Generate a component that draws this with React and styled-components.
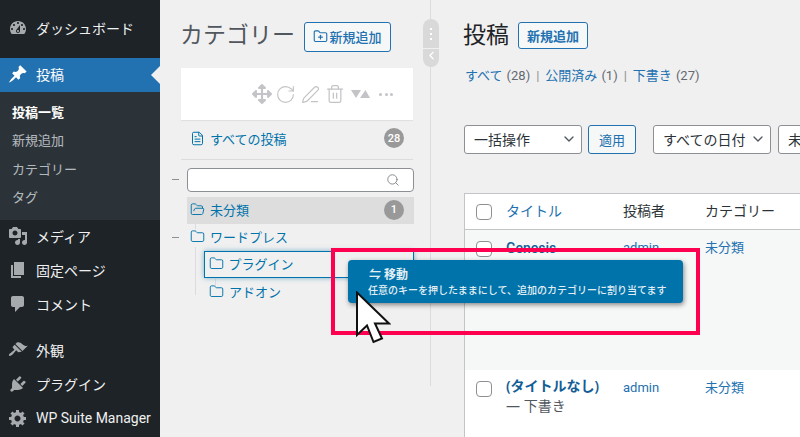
import * as React from 'react'
import styled, {createGlobalStyle} from 'styled-components'
import {
  ChevronDown,
  ChevronLeft,
  FileText,
  Folder,
  FolderOpen,
  FolderPlus,
  PenLine,
  RotateCw,
  Search,
  Trash2,
} from 'lucide-react'
import {FaArrowsAlt} from 'react-icons/fa'

const Global = createGlobalStyle`
  html, body {
    margin: 0;
    padding: 0;
    background: #f0f0f0;
  }
  * {
    box-sizing: border-box;
  }
`

const DASHICONS = {
  dashboard:
    'M3.76 16h12.48c1.1-1.37 1.76-3.11 1.76-5 0-4.42-3.58-8-8-8s-8 3.58-8 8c0 1.89.66 3.63 1.76 5zM10 4c.55 0 1 .45 1 1s-.45 1-1 1-1-.45-1-1 .45-1 1-1zM6 6c.55 0 1 .45 1 1s-.45 1-1 1-1-.45-1-1 .45-1 1-1zm8 0c.55 0 1 .45 1 1s-.45 1-1 1-1-.45-1-1 .45-1 1-1zm-5.37 5.55L12 7v6c0 1.1-.9 2-2 2s-2-.9-2-2c0-.57.24-1.08.63-1.45zM4 10c.55 0 1 .45 1 1s-.45 1-1 1-1-.45-1-1 .45-1 1-1zm12 0c.55 0 1 .45 1 1s-.45 1-1 1-1-.45-1-1 .45-1 1-1zm-5 3c0-.55-.45-1-1-1s-1 .45-1 1 .45 1 1 1 1-.45 1-1z',
  pin: 'M10.44 3.02l1.82-1.82 6.36 6.35-1.83 1.82c-1.05-.68-2.48-.57-3.41.36l-.75.75c-.92.93-1.04 2.35-.35 3.41l-1.83 1.82-2.41-2.41-2.8 2.79c-.42.42-3.38 2.71-3.8 2.29s1.86-3.39 2.28-3.81l2.79-2.79L4.1 9.36l1.83-1.82c1.05.69 2.48.57 3.4-.36l.75-.75c.93-.92 1.05-2.35.36-3.41z',
  media:
    'M13 11V4c0-.55-.45-1-1-1h-1.67L9 1H5L3.67 3H2c-.55 0-1 .45-1 1v7c0 .55.45 1 1 1h10c.55 0 1-.45 1-1zM7 4.5c1.38 0 2.5 1.12 2.5 2.5S8.38 9.5 7 9.5 4.5 8.38 4.5 7 5.62 4.5 7 4.5zM14 6h5v10.5c0 1.38-1.12 2.5-2.5 2.5S14 17.88 14 16.5s1.12-2.5 2.5-2.5c.17 0 .34.02.5.05V9h-3V6zm-4 8.05V13h2v3.5c0 1.38-1.12 2.5-2.5 2.5S7 17.88 7 16.5 8.12 14 9.5 14c.17 0 .34.02.5.05z',
  page: 'M6 15V2h10v13H6zm-1 1h8v2H3V5h2v11z',
  comment:
    'M5 2h9c1.1 0 2 .9 2 2v7c0 1.1-.9 2-2 2h-2l-5 5v-5H5c-1.1 0-2-.9-2-2V4c0-1.1.9-2 2-2z',
  brush:
    'M14.48 11.06L7.41 3.99l1.5-1.5c.5-.56 2.3-.47 3.51.32 1.21.8 1.43 1.28 2.91 2.1 1.18.64 2.45 1.26 4.45.85zm-.71.71L6.7 4.7 4.93 6.47c-.39.39-.39 1.02 0 1.41l1.06 1.06c.39.39.39 1.03 0 1.42-.6.6-1.43 1.11-2.21 1.69-.35.26-.7.53-1.01.84C1.43 13.23.4 14.91 1.2 15.7c.79.8 2.47-.23 3.83-1.59.31-.31.58-.66.84-1.01.58-.78 1.09-1.61 1.69-2.21.39-.39 1.02-.39 1.41 0l1.06 1.06c.39.39 1.02.39 1.41 0z',
  plugin:
    'M13.11 4.36L9.87 7.6 8 5.73l3.24-3.24c.35-.34 1.05-.2 1.56.32.52.51.66 1.21.31 1.55zm-8 1.77l.91-1.12 9.01 9.01-1.19.84c-.71.71-2.63 1.16-3.82 1.16H6.14L4.9 17.26c-.59.59-1.54.59-2.12 0-.59-.58-.59-1.53 0-2.12l1.24-1.24v-3.88c0-1.13.4-3.19 1.09-3.89zm7.26 3.97l3.24-3.24c.34-.35 1.04-.21 1.55.31.52.51.66 1.21.31 1.55l-3.24 3.25z',
  gear: 'M18 12h-2.18c-.17.7-.44 1.35-.81 1.93l1.54 1.54-2.1 2.1-1.54-1.54c-.58.36-1.23.63-1.91.79V19H8v-2.18c-.68-.16-1.33-.43-1.91-.79l-1.54 1.54-2.12-2.12 1.54-1.54c-.36-.58-.63-1.23-.79-1.91H1V9.03h2.17c.16-.7.44-1.35.8-1.94L2.43 5.55l2.1-2.1 1.54 1.54c.58-.37 1.24-.64 1.93-.81V2h3v2.18c.68.16 1.33.43 1.91.79l1.54-1.54 2.12 2.12-1.54 1.54c.36.59.64 1.24.8 1.94H18V12zm-8.5 1.5c1.66 0 3-1.34 3-3s-1.34-3-3-3-3 1.34-3 3 1.34 3 3 3z',
}

const Page = styled.div`
  position: relative;
  display: flex;
  width: 800px;
  height: 437px;
  overflow: hidden;
  background: #f0f0f0;
  color: #3c434a;
  font-family: Roboto, 'Noto Sans CJK JP', sans-serif;
  font-size: 13px;
`

/* ---------- admin menu ---------- */

const Sidebar = styled.nav`
  flex: 0 0 160px;
  padding-top: 12px;
  background: #1d2327;
`

const MenuItem = styled.div`
  position: relative;
  display: flex;
  align-items: center;
  gap: 8px;
  height: 34px;
  padding: 0 0 2px 8px;
  margin-bottom: ${p => (p.$gap ? '12px' : '0')};
  background: ${p => (p.$active ? '#2271b1' : 'transparent')};
  color: ${p => (p.$active ? '#fff' : '#f0f0f0')};
  font-size: 14px;
  white-space: nowrap;

  svg {
    flex: 0 0 20px;
    width: 20px;
    height: 20px;
    fill: ${p => (p.$active ? '#fff' : '#a7aaad')};
  }
`

const ActiveArrow = styled.span`
  position: absolute;
  right: 0;
  top: 8px;
  border: 9px solid transparent;
  border-left-width: 0;
  border-right-color: #f0f0f1;
`

const Submenu = styled.div`
  height: 128px;
  padding: 7px 0 0 12px;
  background: #2c3338;
`

const SubItem = styled.div`
  height: 28.3px;
  line-height: 28px;
  font-size: 13px;
  font-weight: ${p => (p.$current ? 700 : 400)};
  color: ${p => (p.$current ? '#fff' : 'rgba(240, 246, 252, 0.7)')};
`

function DashIcon({name}) {
  return (
    <svg viewBox="0 0 20 20">
      <path d={DASHICONS[name]} />
    </svg>
  )
}

/* ---------- category panel ---------- */

const CategoryPanel = styled.section`
  position: relative;
  flex: 0 0 271px;
  height: 386px;
  padding: 22px 17px 0 21px;
  border-right: 1px solid #dcdcde;
`

const TitleRow = styled.div`
  display: flex;
  align-items: center;
  gap: 9px;
  height: 30px;
`

const PageTitle = styled.h1`
  margin: -2px 0 0 -1px;
  font-size: 23px;
  font-weight: 400;
  line-height: 30px;
  color: ${p => p.$color || '#1d2327'};
`

const OutlineButton = styled.button`
  display: inline-flex;
  flex: 0 0 ${p => p.$w}px;
  align-items: center;
  justify-content: center;
  gap: 1px;
  width: ${p => p.$w}px;
  height: ${p => p.$h}px;
  margin-top: ${p => p.$mt || 0}px;
  padding: 0 0 1px;
  border: 1px solid #2271b1;
  border-radius: 3px;
  background: #f6f7f7;
  color: #2271b1;
  font: inherit;
  font-size: 13px;
  font-weight: ${p => p.$weight || 500};
`

const Toolbar = styled.div`
  display: flex;
  align-items: center;
  justify-content: flex-end;
  gap: 5px;
  height: 52px;
  margin-top: 16px;
  padding: 0 20px 0 0;
  background: #fff;
  box-shadow: 0 1px 1px rgba(0, 0, 0, 0.06);
  color: #c3c4c7;
`

const MoveIcon = styled(FaArrowsAlt)`
  margin-right: -2px;
`

const SortIcon = styled.svg`
  margin-left: 1px;
  fill: #c3c4c7;
`

const ToolDots = styled.span`
  display: flex;
  gap: 2.5px;
  margin-left: 3px;

  i {
    width: 3px;
    height: 3px;
    border-radius: 50%;
    background: #c3c4c7;
  }
`

const AllPosts = styled.div`
  display: flex;
  align-items: center;
  height: 40px;
  padding: 0 9px 3px 9px;
  border-bottom: 1px solid #dcdcde;
  color: #0073aa;
`

const RowLabel = styled.span`
  flex: 1;
  margin-left: ${p => p.$ml}px;
`

const CountBadge = styled.span`
  display: flex;
  align-items: center;
  justify-content: center;
  width: 20px;
  height: 20px;
  border-radius: 50%;
  background: #999;
  color: #fff;
  font-size: 11px;
  font-weight: 500;
`

const SearchRow = styled.div`
  position: relative;
  height: 24px;
  margin: 8px 0 5px 6px;
`

const SearchBox = styled.div`
  display: flex;
  align-items: center;
  justify-content: flex-end;
  height: 24px;
  margin-right: -1px;
  padding-right: 13px;
  border: 1px solid #8c8f94;
  border-radius: 4px;
  background: #fff;
  color: #72777c;
`

const Dash = styled.span`
  position: absolute;
  left: ${p => p.$left}px;
  top: ${p => p.$top}px;
  width: 7px;
  height: 1px;
  background: #8c8f94;
`

const Tree = styled.div`
  position: relative;
  margin-left: 6px;
  margin-right: -1px;
`

const TreeRow = styled.div`
  position: relative;
  display: flex;
  align-items: center;
  height: 27px;
  margin-left: ${p => p.$indent || 0}px;
  padding: 0 10px ${p => p.$pb}px ${p => p.$pad}px;
  color: #0073aa;
  background: ${p => (p.$hover ? '#ddd' : 'transparent')};
  border: ${p => (p.$selected ? '1.5px solid #0073aa' : '0 none')};
  box-shadow: ${p => (p.$selected ? '0 0 5px rgba(0, 115, 170, 0.5)' : 'none')};
`

const Guide = styled.span`
  position: absolute;
  left: ${p => p.$left}px;
  top: ${p => p.$top}px;
  width: 1px;
  height: ${p => p.$h}px;
  background: #dcdcde;
`

const Splitter = styled.div`
  position: absolute;
  right: -9px;
  top: 19px;
  display: flex;
  flex-direction: column;
  align-items: center;
  width: 16px;
  height: 48px;
  border-radius: 8px;
  background: #d9d9d9;
  color: #fff;
  overflow: hidden;
`

const SplitterGrip = styled.div`
  display: flex;
  flex: 0 0 30px;
  flex-direction: column;
  align-items: center;
  justify-content: center;
  gap: 3px;
  width: 100%;
  border-bottom: 1px solid #f0f0f0;

  i {
    width: 2px;
    height: 2px;
    background: #fff;
  }
`

/* ---------- posts list ---------- */

const Main = styled.main`
  flex: 1;
  min-width: 0;
  padding: 22px 0 0 33px;
  overflow: hidden;
`

const Filters = styled.div`
  display: flex;
  height: 20px;
  margin: 14px 0 0 1px;
  line-height: 20px;
  color: #646970;
  white-space: nowrap;
`

const FilterLink = styled.a`
  margin-right: 4px;
  color: #2271b1;
`

const Pipe = styled.span`
  margin: 0 6px 0 6px;
  color: #8c8f94;
`

const Actions = styled.div`
  display: flex;
  align-items: center;
  height: 29px;
  margin-top: 39px;
  white-space: nowrap;
`

const SelectBox = styled.div`
  display: flex;
  flex: 0 0 ${p => p.$w}px;
  align-items: center;
  justify-content: space-between;
  height: 29px;
  margin: 0 ${p => p.$mr}px 0 ${p => p.$ml || 0}px;
  padding: 0 4px 1px ${p => p.$pl}px;
  border: 1px solid #8c8f94;
  border-radius: 3px;
  background: #fff;
  color: #2c3338;
  font-size: 14px;
`

const Table = styled.div`
  width: 420px;
  height: 260px;
  margin-top: 39px;
  background: #fff;
  border: 1px solid #c3c4c7;
  border-right: 0;
`

const TableRow = styled.div`
  display: grid;
  grid-template-columns: 41px 117px 82px 1fr;
  align-items: start;
  height: ${p => p.$h}px;
  padding-top: ${p => p.$pt}px;
  background: ${p => (p.$tint ? '#f6f7f7' : '#fff')};
  border-bottom: ${p => (p.$head ? '1px solid #c3c4c7' : '0 none')};
  font-size: ${p => (p.$head ? '14px' : '13px')};
`

const Check = styled.span`
  display: block;
  width: 16px;
  height: 16px;
  margin: ${p => p.$mt}px 0 0 11px;
  border: 1px solid #8c8f94;
  border-radius: 4px;
  background: #fff;
`

const CellLink = styled.a`
  color: #2271b1;
  line-height: 20px;
`

const GenesisLink = styled(CellLink)`
  color: #135e96;
  font-size: 14px;
  font-weight: 500;
`

const PostTitle = styled.div`
  margin-top: -2px;
  font-family: 'Noto Sans', 'Noto Sans CJK JP', sans-serif;
  font-size: 14px;
  line-height: 20px;
  color: #50575e;

  b {
    display: block;
    color: #135e96;
    font-weight: 600;
  }
`

const HeadText = styled.span`
  color: ${p => p.$color || '#2c3338'};
  line-height: 20px;
`

/* ---------- overlay ---------- */

const Highlight = styled.div`
  position: absolute;
  left: 331px;
  top: 248px;
  width: 369px;
  height: 87px;
  border: 4px solid #ff0050;
`

const Tip = styled.div`
  position: absolute;
  left: 348px;
  top: 260px;
  width: 335px;
  height: 43px;
  padding: 5px 0 0 20px;
  border-radius: 4px;
  background: #0073aa;
  box-shadow: 1px 2px 5px rgba(0, 0, 0, 0.45);
  color: #e3eff5;
  font-size: 10px;
  font-weight: 500;
  white-space: nowrap;
`

const TipTitle = styled.div`
  display: flex;
  align-items: center;
  gap: 3px;
  margin-left: 1px;
  height: 17px;
  font-size: 12px;
  font-weight: 700;
`

const Cursor = styled.svg`
  position: absolute;
  left: 355px;
  top: 291px;
  width: 36px;
  height: 53px;
`

const MENU_TOP = [{icon: 'dashboard', label: 'ダッシュボード', gap: true}]
const MENU_MIDDLE = [
  {icon: 'media', label: 'メディア'},
  {icon: 'page', label: '固定ページ'},
  {icon: 'comment', label: 'コメント', gap: true},
  {icon: 'brush', label: '外観'},
  {icon: 'plugin', label: 'プラグイン'},
  {icon: 'gear', label: 'WP Suite Manager'},
]
const SUBMENU = ['投稿一覧', '新規追加', 'カテゴリー', 'タグ']

function AdminMenu() {
  const item = m => (
    <MenuItem key={m.label} $gap={m.gap}>
      <DashIcon name={m.icon} />
      {m.label}
    </MenuItem>
  )
  return (
    <Sidebar>
      {MENU_TOP.map(item)}
      <MenuItem $active>
        <DashIcon name="pin" />
        投稿
        <ActiveArrow />
      </MenuItem>
      <Submenu>
        {SUBMENU.map((s, i) => (
          <SubItem key={s} $current={i === 0}>
            {s}
          </SubItem>
        ))}
      </Submenu>
      {MENU_MIDDLE.map(item)}
    </Sidebar>
  )
}

function CategoryTree() {
  return (
    <CategoryPanel>
      <TitleRow>
        <PageTitle $color="#50575e">カテゴリー</PageTitle>
        <OutlineButton $w={87} $h={30}>
          <FolderPlus size={15} strokeWidth={1.8} />
          新規追加
        </OutlineButton>
      </TitleRow>
      <Toolbar>
        <MoveIcon size={20} />
        <RotateCw size={21} strokeWidth={1.3} />
        <PenLine size={19} strokeWidth={1.5} />
        <Trash2 size={20} strokeWidth={1.5} />
        <SortIcon width="20" height="10" viewBox="0 0 20 10">
          <path d="M0 1h10L5 9zM9 9h10L14.500 1z" />
        </SortIcon>
        <ToolDots>
          <i />
          <i />
          <i />
        </ToolDots>
      </Toolbar>
      <AllPosts>
        <FileText size={15} strokeWidth={1.6} />
        <RowLabel $ml={5}>すべての投稿</RowLabel>
        <CountBadge>28</CountBadge>
      </AllPosts>
      <SearchRow>
        <Dash $left={-15} $top={11} />
        <SearchBox>
          <Search size={14} strokeWidth={1.4} />
        </SearchBox>
      </SearchRow>
      <Tree>
        <Dash $left={-15} $top={40} />
        <Guide $left={8} $top={24} $h={8} />
        <Guide $left={8} $top={50} $h={48} />
        <Guide $left={28} $top={82} $h={8} />
        <TreeRow $hover $pad={3} $pb={2}>
          <FolderOpen size={15} strokeWidth={1.5} />
          <RowLabel $ml={5}>未分類</RowLabel>
          <CountBadge>1</CountBadge>
        </TreeRow>
        <TreeRow $pad={3} $pb={2}>
          <Folder size={15} strokeWidth={1.5} />
          <RowLabel $ml={5}>ワードプレス</RowLabel>
        </TreeRow>
        <TreeRow $selected $indent={17} $pad={3.5} $pb={2}>
          <Folder size={15} strokeWidth={1.5} />
          <RowLabel $ml={5}>プラグイン</RowLabel>
        </TreeRow>
        <TreeRow $indent={17} $pad={5} $pb={0}>
          <Folder size={15} strokeWidth={1.5} />
          <RowLabel $ml={5}>アドオン</RowLabel>
        </TreeRow>
      </Tree>
      <Splitter>
        <SplitterGrip>
          <i />
          <i />
          <i />
        </SplitterGrip>
        <ChevronLeft size={13} strokeWidth={2.2} />
      </Splitter>
    </CategoryPanel>
  )
}

function PostsList() {
  return (
    <Main>
      <TitleRow>
        <PageTitle>投稿</PageTitle>
        <OutlineButton $w={70} $h={27} $mt={-3} $weight={600}>
          新規追加
        </OutlineButton>
      </TitleRow>
      <Filters>
        <FilterLink>すべて</FilterLink>
        <span>(28)</span>
        <Pipe>|</Pipe>
        <FilterLink>公開済み</FilterLink>
        <span>(1)</span>
        <Pipe>|</Pipe>
        <FilterLink>下書き</FilterLink>
        <span>(27)</span>
      </Filters>
      <Actions>
        <SelectBox $w={118} $mr={6} $pl={9}>
          一括操作
          <ChevronDown size={16} strokeWidth={2} color="#50575e" />
        </SelectBox>
        <OutlineButton $w={48} $h={29} $weight={400}>
          適用
        </OutlineButton>
        <SelectBox $w={118} $mr={7} $ml={17} $pl={9}>
          すべての日付
          <ChevronDown size={16} strokeWidth={2} color="#50575e" />
        </SelectBox>
        <SelectBox $w={60} $mr={0} $pl={9}>
          未
        </SelectBox>
      </Actions>
      <Table>
        <TableRow $head $h={36} $pt={7}>
          <Check $mt={3} />
          <HeadText $color="#2271b1">タイトル</HeadText>
          <HeadText>投稿者</HeadText>
          <HeadText>カテゴリー</HeadText>
        </TableRow>
        <TableRow $tint $h={140} $pt={8}>
          <Check $mt={3} />
          <GenesisLink>Genesis</GenesisLink>
          <CellLink>admin</CellLink>
          <CellLink>未分類</CellLink>
        </TableRow>
        <TableRow $h={82} $pt={8}>
          <Check $mt={3} />
          <PostTitle>
            <b>(タイトルなし)</b>
            — 下書き
          </PostTitle>
          <CellLink>admin</CellLink>
          <CellLink>未分類</CellLink>
        </TableRow>
      </Table>
    </Main>
  )
}

export default function App() {
  return (
    <Page>
      <Global />
      <AdminMenu />
      <CategoryTree />
      <PostsList />
      <Highlight />
      <Tip>
        <TipTitle>⇋ 移動</TipTitle>
        任意のキーを押したままにして、追加のカテゴリーに割り当てます
      </Tip>
      <Cursor viewBox="0 0 36 53">
        <path
          d="M2 1.500V44L12 34.500L18.500 51L27 47.500L20 32.500H34Z"
          fill="#fff"
          stroke="#111"
          strokeWidth="2"
        />
      </Cursor>
    </Page>
  )
}
